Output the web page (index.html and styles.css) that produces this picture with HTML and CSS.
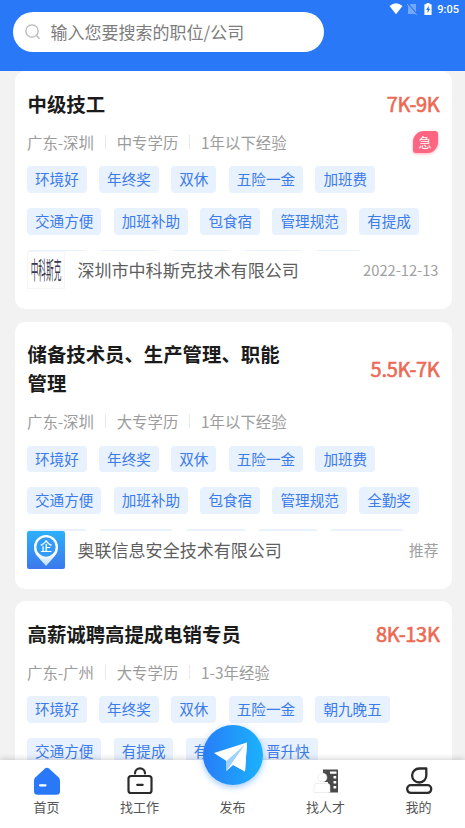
FILE: index.html
```
<!DOCTYPE html>
<html lang="zh-CN">
<head>
<meta charset="utf-8">
<title>招聘</title>
<link rel="stylesheet" href="styles.css">
</head>
<body>
<div class="app">
  <header class="header">
    <div class="search">
      <svg class="search-icon" viewBox="0 0 16 16"><circle cx="7" cy="7" r="6.2"/><path d="M11.5 11.5L14.6 14.8"/></svg>
      <span>输入您要搜索的职位/公司</span>
    </div>
    <div class="status">
      <svg width="14" height="12" viewBox="0 0 14 12"><path fill="#fff" d="M.5 3Q7-2.4 13.5 3L7 11.2Z"/></svg>
      <svg class="sim" width="10" height="12" viewBox="0 0 10 12"><path fill="#74a7fb" d="M3.5 1H9v10H1V3.8Z"/><path stroke="#2878f8" stroke-width="1.6" d="M0 0L10 11.5"/><path stroke="#8ab3fb" d="M0 1L9.5 12"/></svg>
      <svg class="battery" width="8" height="12" viewBox="0 0 8 12"><path fill="#fff" d="M2.5 0h3v1.2H7.6V12H.4V1.2H2.5Z"/><path fill="#2878f8" d="M4.8 2.7L2 7h1.6v3L6.2 5.8H4.7Z"/></svg>
      <span>9:05</span>
    </div>
  </header>
  <main class="list">
    <article class="card">
      <div class="head"><h2>中级技工</h2><b class="pay">7K-9K</b></div>
      <div class="meta"><span>广东-深圳</span><span>中专学历</span><span>1年以下经验</span><i class="urgent">急</i></div>
      <div class="tags"><span>环境好</span><span>年终奖</span><span>双休</span><span>五险一金</span><span>加班费</span><span>交通方便</span><span>加班补助</span><span>包食宿</span><span>管理规范</span><span>有提成</span><i class="w3"></i><i class="w3"></i><i class="w3"></i><i class="w3"></i><i class="w2"></i></div>
      <div class="company"><div class="logo logo-text"><span>中科斯克</span></div><span class="name">深圳市中科斯克技术有限公司</span><span class="date">2022-12-13</span></div>
    </article>
    <article class="card">
      <div class="head"><h2>储备技术员、生产管理、职能管理</h2><b class="pay">5.5K-7K</b></div>
      <div class="meta"><span>广东-深圳</span><span>大专学历</span><span>1年以下经验</span></div>
      <div class="tags"><span>环境好</span><span>年终奖</span><span>双休</span><span>五险一金</span><span>加班费</span><span>交通方便</span><span>加班补助</span><span>包食宿</span><span>管理规范</span><span>全勤奖</span><i class="w3"></i><i class="w4"></i><i class="w3"></i><i class="w3"></i><i class="w4"></i></div>
      <div class="company">
        <svg class="logo" viewBox="0 0 38 38"><defs><linearGradient id="lg" x2="0" y2="1"><stop stop-color="#2cb1fb"/><stop offset="1" stop-color="#3c78ec"/></linearGradient><linearGradient id="pin" x2="0" y2="1"><stop offset=".6" stop-color="#fff"/><stop offset="1" stop-color="#b9dcff"/></linearGradient></defs><rect width="38" height="38" rx="2" fill="url(#lg)"/><path d="M10.2 25Q7 21.5 7 16a12 12 0 0 1 24 0q0 5.500-3.200 9L19 35Z" fill="url(#pin)"/><circle cx="19" cy="16" r="9.700" fill="#309cf6"/><text x="19" y="20.300" text-anchor="middle" class="pin-label">企</text></svg>
        <span class="name">奥联信息安全技术有限公司</span><span class="date">推荐</span>
      </div>
    </article>
    <article class="card">
      <div class="head"><h2>高薪诚聘高提成电销专员</h2><b class="pay">8K-13K</b></div>
      <div class="meta"><span>广东-广州</span><span>大专学历</span><span>1-3年经验</span></div>
      <div class="tags"><span>环境好</span><span>年终奖</span><span>双休</span><span>五险一金</span><span>朝九晚五</span><span>交通方便</span><span>有提成</span><span>有餐补</span><span>晋升快</span></div>
      <div class="company"></div>
    </article>
  </main>
  <nav class="nav">
    <a class="item"><svg viewBox="0 0 28 30"><path fill="#2878f8" d="M12 1.600Q14 -.2 16 1.600L25.500 10.300Q27 11.700 27 13.800V24.300Q27 27.800 23.500 27.800H4.500Q1 27.800 1 24.300V13.800Q1 11.700 2.500 10.300Z"/><path stroke="#fff" stroke-width="2.200" stroke-linecap="round" d="M7 18.300h5.500"/></svg><span>首页</span></a>
    <a class="item"><svg viewBox="0 0 28 30" fill="none" stroke="#2b2b2b" stroke-width="2.200" stroke-linecap="round"><rect x="2.500" y="9" width="23" height="17" rx="2.600"/><path d="M9 6.400a5 5 0 0 1 10 0M11.200 17.800h5.500"/></svg><span>找工作</span></a>
    <a class="item"><span class="publish"><svg viewBox="0 0 60 60"><path fill="#fff" d="M11 28L44 17.500L42 46.500L30 40L23.500 46V36Z"/><path fill="#9fd3ff" d="M23.500 36L42 19.500L28.500 38.800L23.500 46Z"/><path fill="#fff" d="M28.500 38.800L44 17.500L42 46.500Z"/></svg></span><span>发布</span></a>
    <a class="item"><svg viewBox="0 0 28 30"><path fill="#4a4a4a" d="M11 2.500h15V25.500H16V15H11Z"/><path fill="#fff" d="M18 4.500h6.500v2.200H18ZM21.500 9h2.700v2.500H21.500ZM21.500 14h2.700v2.500H21.500ZM21.500 19h2.700v2.500H21.500Z"/><g fill="#fff" stroke="#ddd" stroke-width=".5"><circle cx="10.500" cy="10.500" r="4.500"/><path d="M2 25.500V19q0-2.500 2.500-2.500H15.500q2.500 0 2.500 2.500v6.500Z"/></g></svg><span>找人才</span></a>
    <a class="item"><svg viewBox="0 0 28 30" fill="none" stroke="#2b2b2b" stroke-width="2.300"><path d="M14.200 1.500H21.300V8.300A7.100 7 0 1 1 14.200 1.500Z" stroke-linejoin="round"/><rect x="2.200" y="18.200" width="24" height="7.700" rx="3.600"/></svg><span>我的</span></a>
  </nav>
</div>
</body>
</html>
```
FILE: styles.css
```
* { box-sizing: border-box; }
body {
  margin: 0;
  background: #f2f2f2;
  font-family: "Noto Sans CJK SC", "Noto Sans", sans-serif;
  font-weight: 400;
}
.app { height: 828px; display: flex; flex-direction: column; overflow: hidden; }
.header {
  flex: none;
  height: 71px;
  background: #2878f8;
  display: flex;
  justify-content: space-between;
  padding: 12px 6px 0 13px;
}
.search {
  width: 311px;
  height: 40px;
  border-radius: 20px;
  background: #fff;
  display: flex;
  align-items: center;
  gap: 9.500px;
  padding: 0 0 1px 12px;
  font-size: 17px;
  color: #7d7d7d;
}
.search-icon { width: 16px; height: 16px; fill: none; stroke: #b8b8bd; stroke-width: 1.3; }
.status {
  display: flex;
  align-items: center;
  height: 12px;
  margin-top: -9px;
  font: 500 11px Roboto, sans-serif;
  color: #fff;
}
.sim { margin-left: 4px; }
.battery { margin: 0 5px 0 7px; }
.list {
  flex: 1;
  min-height: 0;
  overflow: hidden;
  padding: 0 13.500px 0 15px;
  display: flex;
  flex-direction: column;
  gap: 12.300px;
}
.card { flex: none; background: #fff; border-radius: 10px; padding: 18.600px 12px 19.800px; }
.head { display: flex; justify-content: space-between; align-items: center; }
h2 { margin: 0 0 0 .5px; width: 258px; font-size: 19.400px; line-height: 28.700px; font-weight: 700; color: #1b1b1b; }
.pay { font-size: 20px; line-height: 28.700px; font-weight: 400; letter-spacing: -.3px; color: #ec6953; -webkit-text-stroke: .6px #ec6953; }
.meta {
  display: flex;
  align-items: center;
  height: 22px;
  margin: 12.700px 2px 13.200px 0;
  font-size: 15.400px;
  line-height: 22px;
  color: #9c9c9c;
}
.meta span + span { display: flex; align-items: center; }
.meta span + span::before { content: ""; width: 1px; height: 14px; background: #e9e9e9; margin: 0 10.800px 0 11px; }
.urgent {
  margin-left: auto;
  width: 25px;
  height: 22px;
  border-radius: 11px 3px 11px 3px;
  background: #fd6580;
  box-shadow: 0 1px 3px #fd658088;
  color: #fff;
  font-size: 13px;
  font-style: normal;
  text-align: center;
}
.tags {
  height: 85px;
  overflow: hidden;
  display: flex;
  flex-wrap: wrap;
  align-content: flex-start;
  gap: 15px 12.300px;
}
.tags span, .tags i {
  height: 26.700px;
  padding: 0 8px;
  border-radius: 4px;
  background: #e8f1fe;
  color: #3b7bea;
  font-size: 14.600px;
  line-height: 26.700px;
  white-space: nowrap;
}
.tags .w2 { width: 45.200px; }
.tags .w3 { width: 59.800px; }
.tags .w4 { width: 74.400px; }
.company { height: 38.500px; display: flex; align-items: center; font-size: 17.050px; color: #5e5e5e; }
.name, .date { position: relative; top: -.5px; }
.logo { flex: none; width: 38px; height: 38px; margin: 0 12.200px 0 .3px; }
.logo-text { display: flex; align-items: center; justify-content: center; border: 1px solid #f6f6f6; overflow: hidden; }
.logo-text span { color: #3a3a4c; font-size: 16px; line-height: 24px; white-space: nowrap; transform: translateY(-1px) scale(.48, 1.480); }
.pin-label { font-size: 12px; font-weight: 500; fill: #fff; }
.date { margin: 0 1px 0 auto; font-size: 14.700px; color: #a0a0a0; }
.nav {
  position: relative;
  flex: none;
  height: 68px;
  background: #fff;
  box-shadow: 0 -1px 6px rgba(0, 0, 0, .18);
  display: grid;
  grid-template-columns: repeat(5, 1fr);
}
.item { display: flex; flex-direction: column; align-items: center; padding-top: 7px; font-size: 13px; line-height: 20px; color: #555; }
.item > svg { width: 28px; height: 30px; }
.publish {
  width: 60px;
  height: 60px;
  margin: -42px 0 12px;
  border-radius: 50%;
  background: linear-gradient(90deg, #287df8, #1ab2fc);
  box-shadow: 0 2px 6px #3c91f980;
}
.publish svg { display: block; }
```
